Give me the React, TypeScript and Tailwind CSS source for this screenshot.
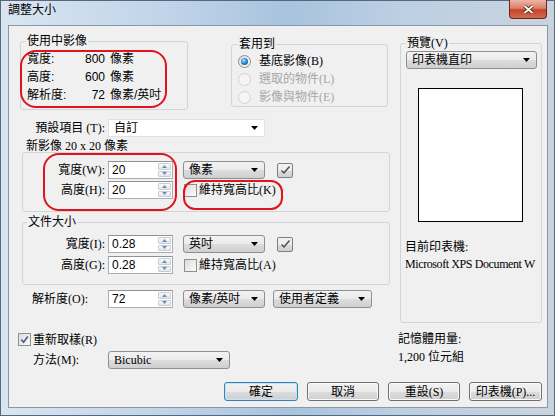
import React from 'react'

const SERIF = 'font-[family-name:Liberation_Serif,Noto_Sans_CJK_TC,serif]'
const SANS = 'font-[family-name:Liberation_Sans,Noto_Sans_CJK_TC,sans-serif]'
const BTN_BG = 'bg-[linear-gradient(#f2f2f2_0%,#ebebeb_50%,#dddddd_51%,#cfcfcf_100%)]'

function Arrow() {
  return (
    <svg width="7" height="4" viewBox="0 0 7 4">
      <path d="M0 0H7L3.5 4Z" fill="#000" />
    </svg>
  )
}

function Combo({ text, className = '', font = SANS }: { text: string; className?: string; font?: string }) {
  return (
    <div className={`flex h-[18px] items-center rounded-[3px] border border-[#8e8f8f] ${BTN_BG} pl-[5px] pr-[6px] ${className}`}>
      <span className={`flex-1 whitespace-nowrap leading-[14px] ${font}`}>{text}</span>
      <Arrow />
    </div>
  )
}

function Spin({ value }: { value: string }) {
  return (
    <div className="flex h-[18px] w-[65px] border border-[#abadb3] border-t-[#8e9299] bg-white">
      <span className={`flex-1 pl-[3px] leading-[16px] ${SANS}`}>{value}</span>
      <div className="my-[1px] mr-[1px] flex w-[13px] flex-col gap-[1px]">
        <div className="flex flex-1 items-center justify-center rounded-[1px] border border-[#c9ced6] bg-[linear-gradient(#f7f9fb,#e2e7ed)]">
          <svg width="5" height="3" viewBox="0 0 5 3">
            <path d="M0 3H5L2.5 0Z" fill="#6f8db0" />
          </svg>
        </div>
        <div className="flex flex-1 items-center justify-center rounded-[1px] border border-[#c9ced6] bg-[linear-gradient(#f7f9fb,#e2e7ed)]">
          <svg width="5" height="3" viewBox="0 0 5 3">
            <path d="M0 0H5L2.5 3Z" fill="#6f8db0" />
          </svg>
        </div>
      </div>
    </div>
  )
}

function CheckBtn() {
  return (
    <div className={`flex h-[15px] w-[16px] items-center justify-center rounded-[2px] border border-[#7f7f7f] ${BTN_BG}`}>
      <svg width="11" height="10" viewBox="0 0 11 10">
        <path d="M1.5 5.5L4 8L9.5 1.5" stroke="#4d4d4d" strokeWidth="1.5" fill="none" />
      </svg>
    </div>
  )
}

function Check({ checked }: { checked?: boolean }) {
  return (
    <div className="flex h-[13px] w-[13px] shrink-0 items-center justify-center border border-[#8f8f8f] bg-[linear-gradient(135deg,#dcdcdc,#fbfbfb)]">
      {checked && (
        <svg width="9" height="9" viewBox="0 0 9 9">
          <path d="M1.3 4.6L3.6 7.2L7.8 1.6" stroke="#4a5d8c" strokeWidth="1.6" fill="none" />
        </svg>
      )}
    </div>
  )
}

function Radio({ on, disabled }: { on?: boolean; disabled?: boolean }) {
  return (
    <div
      className={`flex h-[13px] w-[13px] shrink-0 items-center justify-center rounded-full border ${
        disabled ? 'border-[#d2d2d2] bg-[#f5f5f5]' : 'border-[#8f8f8f] bg-[linear-gradient(135deg,#dcdcdc,#fbfbfb)]'
      }`}
    >
      {on && <div className="h-[7px] w-[7px] rounded-full bg-[radial-gradient(circle_at_40%_35%,#a6e4ff_0%,#2b8fd0_45%,#0b4a7a_100%)]" />}
    </div>
  )
}

function Btn({ label, def, className = '' }: { label: string; def?: boolean; className?: string }) {
  return (
    <div
      className={`flex h-[19px] items-center justify-center rounded-[3px] border ${
        def ? 'border-[#3c7fb1] shadow-[inset_0_0_0_1px_#bfe6fb]' : 'border-[#707070] shadow-[inset_0_0_0_1px_#fafafa]'
      } ${BTN_BG} leading-[14px] ${className}`}
    >
      {label}
    </div>
  )
}

export default function App() {
  return (
    <div
      className={`relative flex h-[416px] w-[555px] flex-col overflow-hidden bg-[linear-gradient(90deg,#d9e5f1_0%,#c0d4e9_30%,#a8c3df_52%,#bccfe3_72%,#c9d3de_100%)] shadow-[inset_0_0_0_1px_#56687c] text-[12px] text-black ${SERIF}`}
    >
      {/* title bar */}
      <div className="flex h-[25px] shrink-0">
        <span className={`pl-[8px] pt-[3px] leading-[14px] ${SANS}`}>調整大小</span>
        <div className="ml-auto mr-[8px] flex h-[19px] w-[38px] items-center justify-center rounded-b-[4px] border border-t-0 border-[#6a2619] bg-[linear-gradient(#ecb6a8_0%,#dc8068_45%,#c3452b_55%,#d46a50_100%)]">
          <svg width="13" height="11" viewBox="0 0 13 11">
            <path d="M2.5 2L10.5 9M10.5 2L2.5 9" stroke="#4a1a12" strokeWidth="3.4" />
            <path d="M2.5 2L10.5 9M10.5 2L2.5 9" stroke="#fff" strokeWidth="1.8" />
          </svg>
        </div>
      </div>

      {/* client area */}
      <div className="ml-[8px] flex h-[383px] w-[540px] flex-col border border-[#8b97a4] bg-[#f0f0f0]">
        <div className="flex h-[297px] shrink-0">
          {/* left column */}
          <div className="flex w-[381px] flex-col pl-[11px]">
            <div className="flex items-start pt-[8px]">
              <fieldset className="w-[168px] rounded-[3px] border border-[#d0d5da]">
                <legend className={`ml-[5px] px-[1px] leading-[14px] ${SANS}`}>使用中影像</legend>
                <div className={`pb-[5px] pl-[6px] pt-[2px] ${SANS}`}>
                  <div className="flex h-[18px] items-center">
                    <span className="w-[50px]">寬度:</span>
                    <span className="w-[28px] text-right">800</span>
                    <span className="ml-[5px]">像素</span>
                  </div>
                  <div className="flex h-[18px] items-center">
                    <span className="w-[50px]">高度:</span>
                    <span className="w-[28px] text-right">600</span>
                    <span className="ml-[5px]">像素</span>
                  </div>
                  <div className="flex h-[18px] items-center">
                    <span className="w-[50px]">解析度:</span>
                    <span className="w-[28px] text-right">72</span>
                    <span className="ml-[5px]">像素/英吋</span>
                  </div>
                </div>
              </fieldset>

              <fieldset className="ml-[43px] mt-[3px] w-[157px] rounded-[3px] border border-[#d0d5da]">
                <legend className={`ml-[6px] px-[1px] leading-[14px] ${SANS}`}>套用到</legend>
                <div className="pl-[6px] pt-[1px]">
                  <div className="flex h-[18px] items-center gap-[8px]">
                    <Radio on />
                    <span>基底影像(B)</span>
                  </div>
                  <div className="flex h-[18px] items-center gap-[8px] text-[#a7a7a7]">
                    <Radio disabled />
                    <span>選取的物件(L)</span>
                  </div>
                  <div className="flex h-[18px] items-center gap-[8px] text-[#a7a7a7]">
                    <Radio disabled />
                    <span>影像與物件(E)</span>
                  </div>
                </div>
              </fieldset>
            </div>

            <div className="mt-[9px] flex h-[18px] items-center">
              <span className="w-[88px] pr-[3px] text-right leading-[14px]">預設項目 (T):</span>
              <div className="flex h-[18px] w-[157px] items-center border border-[#e2e2e2] bg-white pl-[5px] pr-[6px]">
                <span className={`flex-1 leading-[14px] ${SANS}`}>自訂</span>
                <Arrow />
              </div>
            </div>

            <div className="mt-[3px] h-[12px] pl-[6px] leading-[12px]">新影像 20 x 20 像素</div>
            <div className="ml-[2px] w-[368px] rounded-[3px] border border-[#d0d5da] pb-[12px] pt-[8px]">
              <div className="flex h-[18px] items-center">
                <span className="w-[85px] pr-[3px] text-right leading-[14px]">寬度(W):</span>
                <Spin value="20" />
                <Combo text="像素" className="ml-[10px] w-[82px]" />
                <div className="ml-[12px]">
                  <CheckBtn />
                </div>
              </div>
              <div className="mt-[2px] flex h-[18px] items-center">
                <span className="w-[85px] pr-[3px] text-right leading-[14px]">高度(H):</span>
                <Spin value="20" />
                <div className="ml-[11px]">
                  <Check />
                </div>
                <span className="ml-[2px] leading-[14px]">維持寬高比(K)</span>
              </div>
            </div>

            <fieldset className="ml-[2px] mt-[3px] w-[368px] rounded-[3px] border border-[#d0d5da]">
              <legend className={`ml-[4px] px-[1px] leading-[14px] ${SANS}`}>文件大小</legend>
              <div className="pb-[10px] pt-[6px]">
                <div className="flex h-[18px] items-center">
                  <span className="w-[85px] pr-[3px] text-right leading-[14px]">寬度(I):</span>
                  <Spin value="0.28" />
                  <Combo text="英吋" className="ml-[10px] w-[82px]" />
                  <div className="ml-[12px]">
                    <CheckBtn />
                  </div>
                </div>
                <div className="mt-[3px] flex h-[18px] items-center">
                  <span className="w-[85px] pr-[3px] text-right leading-[14px]">高度(G):</span>
                  <Spin value="0.28" />
                  <div className="ml-[11px]">
                    <Check />
                  </div>
                  <span className="ml-[2px] leading-[14px]">維持寬高比(A)</span>
                </div>
              </div>
            </fieldset>

            <div className="mt-[5px] flex h-[18px] items-center">
              <span className="w-[88px] pl-[12px] leading-[14px]">解析度(O):</span>
              <Spin value="72" />
              <Combo text="像素/英吋" className="ml-[10px] w-[82px]" />
              <Combo text="使用者定義" className="ml-[8px] w-[99px]" />
            </div>
          </div>

          {/* preview */}
          <fieldset className="ml-[10px] mt-[10px] h-[287px] w-[142px] rounded-[3px] border border-[#d0d5da]">
            <legend className="ml-[5px] px-[1px] leading-[14px]">預覽(V)</legend>
            <div className="flex flex-col pl-[4px] pt-[1px]">
              <Combo text="印表機直印" className="ml-[1px] w-[131px]" />
              <div className="ml-[13px] mt-[19px] h-[134px] w-[105px] border border-black bg-white" />
              <div className="mt-[18px] leading-[14px]">目前印表機:</div>
              <div className="mt-[3px] whitespace-nowrap leading-[14px] tracking-[-0.4px]">Microsoft XPS Document W</div>
            </div>
          </fieldset>
        </div>

        {/* bottom */}
        <div className="flex flex-1 flex-col">
          <div className="flex">
            <div className="w-[389px] pl-[9px] pt-[10px]">
              <div className="flex h-[13px] items-center">
                <Check checked />
                <span className="ml-[2px] leading-[14px]">重新取樣(R)</span>
              </div>
              <div className="mt-[5px] flex h-[18px] items-center">
                <span className="w-[90px] pl-[15px] leading-[14px]">方法(M):</span>
                <Combo text="Bicubic" className="w-[122px]" font={SERIF} />
              </div>
            </div>
            <div className="pt-[9px]">
              <div className="leading-[14px]">記憶體用量:</div>
              <div className="mt-[4px] leading-[14px]">1,200 位元組</div>
            </div>
          </div>
          <div className="mb-[6px] mt-auto flex justify-end gap-[9px] pr-[5px]">
            <Btn label="確定" def className="w-[74px]" />
            <Btn label="取消" className="w-[72px]" />
            <Btn label="重設(S)" className="w-[72px]" />
            <Btn label="印表機(P)..." className="w-[73px]" />
          </div>
        </div>
      </div>

      {/* red annotation marks */}
      <div className="pointer-events-none absolute left-[20px] top-[50px] h-[58px] w-[147px] rounded-[16px] border-2 border-[#e0141c]" />
      <div className="pointer-events-none absolute left-[43px] top-[153px] h-[58px] w-[134px] rounded-[16px] border-2 border-[#e0141c]" />
      <div className="pointer-events-none absolute left-[183px] top-[180px] h-[30px] w-[100px] rounded-[12px] border-2 border-[#e0141c]" />
    </div>
  )
}
